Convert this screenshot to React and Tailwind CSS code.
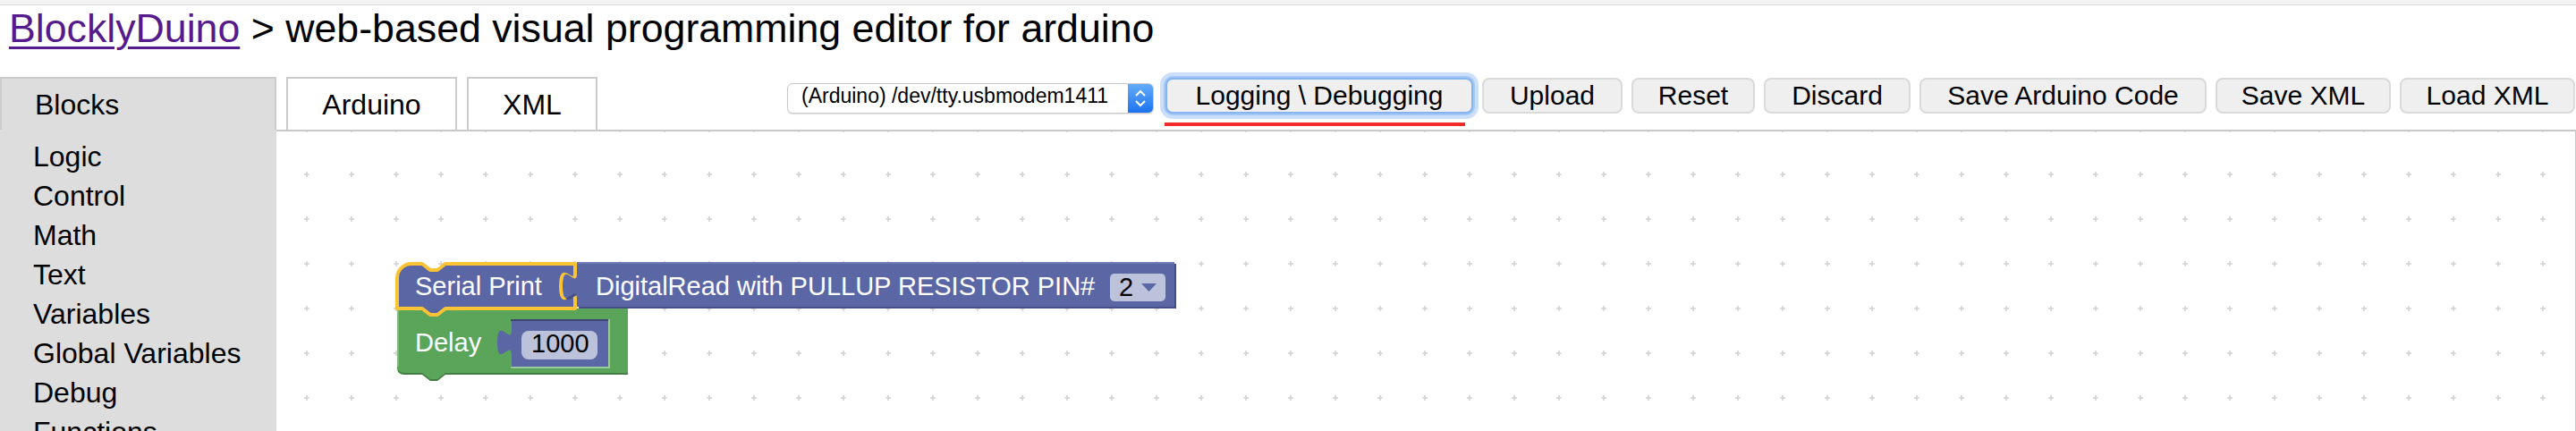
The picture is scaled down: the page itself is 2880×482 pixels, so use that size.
import React from 'react';

const categories = ['Logic', 'Control', 'Math', 'Text', 'Variables', 'Global Variables', 'Debug', 'Functions'];

const toolbarButtons = [
  { label: 'Upload', width: 'w-[157px]' },
  { label: 'Reset', width: 'w-[138px]' },
  { label: 'Discard', width: 'w-[164px]' },
  { label: 'Save Arduino Code', width: 'w-[321px]' },
  { label: 'Save XML', width: 'w-[196px]' },
  { label: 'Load XML', width: 'w-[196px]' },
];

const FONT = "'Liberation Sans', Arial, sans-serif";

// block outlines, in page coordinates (group is shifted back by the canvas offset)
const DELAY_PATH = 'M444 345 H702 V417 H498 l-9 7 h-8 l-9 -7 H452 Q444 417 444 409 Z';
const SERIAL_PATH =
  'M444 311 A16 16 0 0 1 460 295 H472 l9 7 h8 l9 -7 H643 V305 c0 20 -16 -16 -16 15 s16 -5 16 15 V345 H498 l-9 7 h-8 l-9 -7 H444 Z';
const READ_PATH = 'M645 293 H1313 V343 H645 V335 c0 -20 -16 16 -16 -15 s16 5 16 -15 Z';
const NUMBER_PATH = 'M572 358 H680 V410 H572 V398 c0 -20 -16 16 -16 -15 s16 5 16 -15 Z';

function Workspace() {
  return (
    <svg className="absolute inset-0 h-full w-full">
      <defs>
        <pattern id="grid" x="318" y="120" width="50" height="50" patternUnits="userSpaceOnUse">
          <path d="M22 25h6M25 22v6" stroke="#d2d2d2" strokeWidth="1.6" />
        </pattern>
      </defs>
      <g transform="translate(-309 -147)">
        <rect x="309" y="100" width="2600" height="420" fill="url(#grid)" />

        {/* Delay */}
        <path d={DELAY_PATH} fill="#427c42" transform="translate(0 2)" />
        <path d={DELAY_PATH} fill="#5ba55b" />
        <path d="M445 410 V346" stroke="#8cc28c" strokeWidth="1.5" fill="none" />
        <text x="464" y="393" fill="#fff" fontSize="29" fontFamily={FONT}>Delay</text>

        {/* 1000 */}
        <path d={NUMBER_PATH} fill="#5b67a5" />
        <path d="M571 358 H681" stroke="#3d4674" strokeWidth="2" fill="none" />
        <path d="M681 357 V411 H571" stroke="#b3d5b3" strokeWidth="1.5" fill="none" />
        <rect x="583" y="370" width="85" height="32" rx="8" fill="#fff" fillOpacity="0.6" />
        <text x="594" y="394" fill="#000" fontSize="29" fontFamily={FONT}>1000</text>

        {/* Serial Print (selected) */}
        <path d={SERIAL_PATH} fill="#5b67a5" stroke="#fcc435" strokeWidth="4" strokeLinejoin="round" />
        <text x="464" y="330" fill="#fff" fontSize="29" fontFamily={FONT}>Serial Print</text>

        {/* DigitalRead */}
        <path d={READ_PATH} fill="#454e85" transform="translate(2 2)" />
        <path d={READ_PATH} fill="#5b67a5" />
        <path d="M646 294 H1312" stroke="#8890c4" strokeWidth="1" fill="none" />
        <text x="666" y="330" fill="#fff" fontSize="29" fontFamily={FONT}>
          DigitalRead with PULLUP RESISTOR PIN#
        </text>
        <rect x="1241" y="306" width="62" height="31" rx="5" fill="#fff" fillOpacity="0.6" />
        <text x="1251" y="331" fill="#000" fontSize="29" fontFamily={FONT}>2</text>
        <path d="M1276 317 H1293 L1284.5 326 Z" fill="#5b67a5" />
      </g>
    </svg>
  );
}

function PortSelect() {
  return (
    <div className="mr-[3px] flex h-[34px] w-[410px] items-center overflow-hidden rounded-[6px] border border-[#c9c9c9] bg-white shadow-[0_1px_1px_rgba(0,0,0,0.12)]">
      <span className="flex-1 pb-[5px] pl-[15px] text-[23px] leading-none">(Arduino) /dev/tty.usbmodem1411</span>
      <span className="flex h-full w-[28px] items-center justify-center bg-gradient-to-b from-[#62abfb] to-[#1b72ef]">
        <svg width="28" height="34" viewBox="0 0 28 34">
          <path d="M9 14 L14 9 L19 14 M9 20 L14 25 L19 20" stroke="#fff" strokeWidth="2" fill="none" />
        </svg>
      </span>
    </div>
  );
}

export default function App() {
  return (
    <div className="flex h-[482px] w-full flex-col overflow-hidden bg-white font-['Liberation_Sans',Arial,sans-serif] text-black">
      <div className="h-[6px] shrink-0 border-b border-[#d9d9d9] bg-[#f3f3f3]" />

      <h1 className="shrink-0 pl-[10px] text-[44.7px] font-normal leading-[51px]">
        <a href="#" className="text-[#551a8b] underline decoration-[3px] underline-offset-[5px]">
          BlocklyDuino
        </a>{' '}
        &gt; web-based visual programming editor for arduino
      </h1>

      <div className="mt-[29px] flex min-h-0 flex-1">
        {/* toolbox */}
        <aside className="flex w-[309px] shrink-0 flex-col bg-[#dddddd]">
          <div className="flex h-[59px] shrink-0 items-center border-l-2 border-r-2 border-t-2 border-[#cccccc] pl-[37px] text-[32px]">
            Blocks
          </div>
          <ul className="pl-[37px] pt-[8px] text-[32px] leading-[44px]">
            {categories.map((c) => (
              <li key={c}>{c}</li>
            ))}
          </ul>
        </aside>

        <main className="flex min-w-0 flex-1 flex-col">
          <div className="flex h-[59px] shrink-0 items-start">
            <div className="ml-[11px] flex h-full gap-[11px]">
              <div className="flex h-full w-[191px] items-center justify-center border-l-2 border-r-2 border-t-2 border-[#cccccc] text-[32px]">
                Arduino
              </div>
              <div className="flex h-full w-[146px] items-center justify-center border-l-2 border-r-2 border-t-2 border-[#cccccc] text-[32px]">
                XML
              </div>
            </div>

            <div className="ml-auto mr-[1px] mt-[1px] flex items-end gap-[10px]">
              <PortSelect />
              <div className="relative">
                <button className="h-[40px] w-[344px] rounded-[8px] border-2 border-[#86b4f0] bg-[#efefef] text-[30px] leading-none shadow-[0_0_0_2px_#a3c8f7,0_0_0_6px_rgba(140,185,245,0.45)]">
                  {'Logging \\ Debugging'}
                </button>
                <span className="absolute left-[-1px] top-[50px] h-[4px] w-[336px] bg-[#f22b2b]" />
              </div>
              {toolbarButtons.map((b) => (
                <button
                  key={b.label}
                  className={`h-[40px] rounded-[8px] border-2 border-[#dadada] bg-[#efefef] text-[30px] leading-none ${b.width}`}
                >
                  {b.label}
                </button>
              ))}
            </div>
          </div>

          <div className="relative flex-1 border-r border-t-2 border-[#c8c8c8]">
            <Workspace />
          </div>
        </main>
      </div>
    </div>
  );
}
